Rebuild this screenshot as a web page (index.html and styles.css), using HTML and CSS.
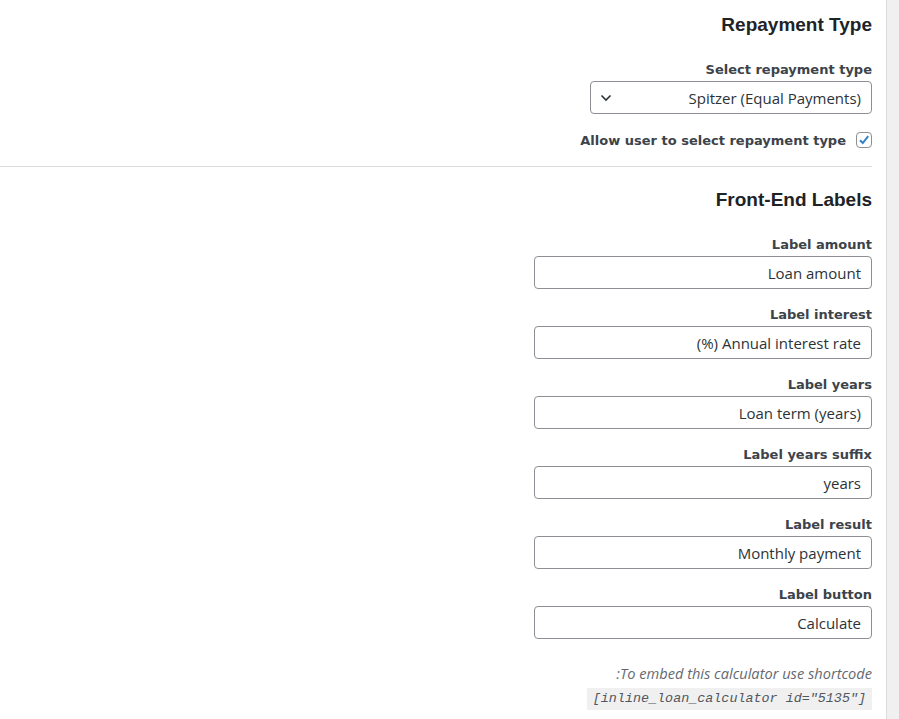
FILE: index.html
```html
<!DOCTYPE html>
<html lang="en">
<head>
  <meta charset="UTF-8" />
  <meta name="viewport" content="width=device-width, initial-scale=1.0"/>
  <title>Loan calculator settings</title>
  <link rel="stylesheet" href="styles.css">
</head>
<body>

  <div class="panel" dir="rtl">
    <h2>Repayment Type</h2>
    <label class="field-label" for="repayment">Select repayment type</label>
    <div class="select-wrap">
      <select id="repayment">
        <option>Spitzer (Equal Payments)</option>
        <option>Equal Principal</option>
      </select>
      <svg class="chevron" width="12" height="8" viewBox="0 0 12 8"><path d="M1.5 1.5 L6 6 L10.5 1.5" fill="none" stroke="#2c3338" stroke-width="1.6"/></svg>
    </div>
    <label class="check-row">
      <span class="checkbox">
        <svg width="14" height="14" viewBox="0 0 14 14"><path d="M3 7.2 L5.8 10 L11.2 3.2" fill="none" stroke="#3582c4" stroke-width="2"/></svg>
      </span>
      Allow user to select repayment type
    </label>

    <hr>

    <h2>Front-End Labels</h2>

    <div class="field">
      <label class="field-label">Label amount</label>
      <input type="text" value="Loan amount">
    </div>
    <div class="field">
      <label class="field-label">Label interest</label>
      <input type="text" value="Annual interest rate (%)">
    </div>
    <div class="field">
      <label class="field-label">Label years</label>
      <input type="text" value="Loan term (years)">
    </div>
    <div class="field">
      <label class="field-label">Label years suffix</label>
      <input type="text" value="years">
    </div>
    <div class="field">
      <label class="field-label">Label result</label>
      <input type="text" value="Monthly payment">
    </div>
    <div class="field">
      <label class="field-label">Label button</label>
      <input type="text" value="Calculate">
    </div>

    <p class="description">To embed this calculator use shortcode:</p>
    <code dir="ltr">[inline_loan_calculator id="5135"]</code>
  </div>

  <div class="gutter"></div>

</body>
</html>
```

FILE: styles.css
```css
body {
  margin: 0;
  background: #f0f0f1;
  display: flex;
  min-height: 100vh;
  font-family: "Open Sans", "Noto Sans", sans-serif;
  color: #1d2327;
}

.panel {
  width: 872px;
  padding: 13px 14px 0 0;
  background: #fff;
  border-right: 1px solid #dcdcde;
}

.gutter {
  flex: 1;
}

h2 {
  font-family: "Liberation Sans", Arial, sans-serif;
  font-size: 19px;
  line-height: 23px;
  font-weight: bold;
  margin: 0 0 25px;
}

.field-label {
  display: block;
  font-family: "DejaVu Sans", Verdana, sans-serif;
  font-size: 13px;
  font-weight: bold;
  line-height: 18px;
  color: #3c434a;
}

.select-wrap {
  position: relative;
  width: 282px;
  margin-top: 2px;
}

select {
  appearance: none;
  width: 282px;
  height: 33px;
  padding: 0 10px 0 30px;
  border: 1px solid #8c8f94;
  border-radius: 4px;
  background: #fff;
  font-family: inherit;
  font-size: 15px;
  color: #2c3338;
}

.chevron {
  position: absolute;
  left: 10px;
  top: 13px;
  pointer-events: none;
}

.check-row {
  display: flex;
  align-items: center;
  gap: 10px;
  margin-top: 16px;
  height: 20px;
  font-family: "DejaVu Sans", Verdana, sans-serif;
  font-size: 13px;
  font-weight: bold;
  color: #3c434a;
}

.checkbox {
  width: 14px;
  height: 14px;
  border: 1px solid #8c8f94;
  border-radius: 4px;
  display: flex;
  align-items: center;
  justify-content: center;
}

hr {
  border: 0;
  border-top: 1px solid #dcdcde;
  margin: 16px 0 21px;
}

.field {
  margin-bottom: 17px;
}

.field input {
  display: block;
  width: 338px;
  height: 33px;
  margin-top: 2px;
  box-sizing: border-box;
  padding: 0 10px;
  border: 1px solid #8c8f94;
  border-radius: 4px;
  font-family: inherit;
  font-size: 15px;
  color: #2c3338;
}

.description {
  margin: 24px 0 2px;
  font-size: 14.6px;
  line-height: 20px;
  font-style: italic;
  color: #646970;
}

code {
  display: inline-block;
  padding: 2px 6px;
  background: #f0f0f1;
  font-family: "Liberation Mono", monospace;
  font-size: 13.4px;
  line-height: 18px;
  font-style: italic;
  color: #50575e;
}
```
